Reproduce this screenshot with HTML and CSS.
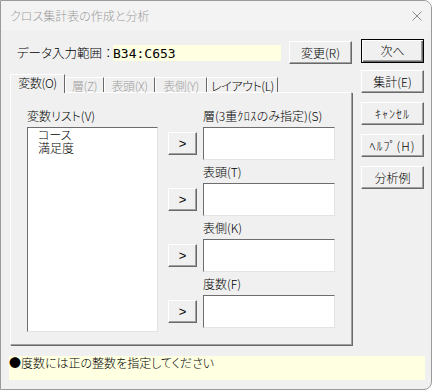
FILE: index.html
```html
<!DOCTYPE html>
<html lang="ja">
<head>
<meta charset="utf-8">
<title>クロス集計表の作成と分析</title>
<link rel="stylesheet" href="styles.css">
</head>
<body>
<div class="window">
  <div class="titlebar">
    <span class="title">クロス集計表の作成と分析</span>
    <svg class="close" width="10" height="10" viewBox="0 0 10 10"><path d="M0.5 0.5L9.5 9.5M9.5 0.5L0.5 9.5" stroke="#8a8a8a" stroke-width="1" fill="none"/></svg>
  </div>
  <div class="main">
    <div class="left">
      <div class="rangerow">
        <span class="rangelabel">データ入力範囲<span class="colon">：</span></span>
        <div class="rangeinput">B34:C653</div>
        <div class="btn btn-change">変更(R)</div>
      </div>
      <div class="tabs">
        <div class="tab active t-var">変数(O)</div>
        <div class="tab disabled t-so">層(Z)</div>
        <div class="tab disabled t-hyo">表頭(X)</div>
        <div class="tab disabled t-soku">表側(Y)</div>
        <div class="tab t-lay">レイアウト(L)</div>
      </div>
      <div class="panel">
        <div class="listcol">
          <div class="plabel">変数リスト(V)</div>
          <div class="listbox">
            <div class="item">コース</div>
            <div class="item">満足度</div>
          </div>
        </div>
        <div class="fields">
          <div class="field">
            <div class="flabel">層(3重<span class="hw">ｸﾛｽ</span>のみ指定)(S)</div>
            <div class="frow"><div class="btn btn-arrow">&gt;</div><div class="fbox"></div></div>
          </div>
          <div class="field">
            <div class="flabel">表頭(T)</div>
            <div class="frow"><div class="btn btn-arrow">&gt;</div><div class="fbox"></div></div>
          </div>
          <div class="field">
            <div class="flabel">表側(K)</div>
            <div class="frow"><div class="btn btn-arrow">&gt;</div><div class="fbox"></div></div>
          </div>
          <div class="field">
            <div class="flabel">度数(F)</div>
            <div class="frow"><div class="btn btn-arrow">&gt;</div><div class="fbox"></div></div>
          </div>
        </div>
      </div>
    </div>
    <div class="right">
      <div class="btn btn-side btn-default">次へ</div>
      <div class="btn btn-side">集計(E)</div>
      <div class="btn btn-side hwbtn">ｷｬﾝｾﾙ</div>
      <div class="btn btn-side hwbtn">ﾍﾙﾌﾟ(H)</div>
      <div class="btn btn-side">分析例</div>
    </div>
  </div>
  <div class="status">●度数には正の整数を指定してください</div>
</div>
</body>
</html>
```
FILE: styles.css
```css
* { box-sizing: border-box; }
html, body { margin: 0; padding: 0; }
body {
  background: #ffffff;
  font-family: "Noto Sans CJK JP", "Liberation Sans", sans-serif;
  font-size: 12px;
  font-weight: 300;
  color: #000;
}
.window {
  width: 432px;
  height: 390px;
  background: #f0f0f0;
  border: 1px solid #9a9a9a;
  border-radius: 0 8px 8px 0;
  overflow: hidden;
}
.titlebar {
  height: 30px;
  background: #f3f3f3;
  display: flex;
  align-items: center;
  justify-content: space-between;
  padding: 0 9px 0 9px;
}
.title {
  color: #9b9b9b;
  font-size: 12px;
  font-feature-settings: "palt";
  line-height: 14px;
}
.close { display: block; }
.main {
  display: flex;
  padding-left: 9px;
}
.left { width: 342px; }
.rangerow {
  margin-top: 10px;
  height: 23px;
  display: flex;
  align-items: center;
}
.rangelabel {
  margin-left: 7px;
  width: 96px;
  font-size: 12.5px;
  line-height: 16px;
  font-feature-settings: "palt";
  white-space: nowrap;
}
.colon { font-feature-settings: normal; }
.rangeinput {
  width: 168px;
  height: 16px;
  background: #ffffe1;
  font-family: "DejaVu Sans Mono", "Liberation Mono", monospace;
  font-size: 13px;
  font-weight: 400;
  line-height: 17px;
}
.btn {
  background: #f0f0f0;
  border: 1px solid;
  border-color: #ffffff #696969 #696969 #ffffff;
  box-shadow: inset -1px -1px 0 #a0a0a0;
  display: flex;
  align-items: center;
  justify-content: center;
  font-size: 12px;
  line-height: 14px;
  font-feature-settings: "palt";
  white-space: nowrap;
}
.btn-change {
  margin-left: 8px;
  width: 63px;
  height: 23px;
}
.tabs {
  margin-top: 10px;
  height: 18px;
  display: flex;
  align-items: flex-end;
  position: relative;
  z-index: 1;
}
.tab {
  height: 15px;
  border-left: 1px solid #ffffff;
  border-top: 1px solid #ffffff;
  border-right: 1px solid #696969;
  display: flex;
  align-items: center;
  justify-content: center;
  line-height: 13px;
  font-feature-settings: "palt";
  letter-spacing: -0.4px;
  white-space: nowrap;
  background: #f0f0f0;
}
.tab.active {
  height: 19px;
  margin-bottom: -1px;
  padding-bottom: 3px;
}
.tab.disabled { color: #a0a0a0; }
.t-var { width: 55px; }
.t-so { width: 39px; }
.t-hyo { width: 51px; }
.t-soku { width: 52px; }
.t-lay { width: 71px; }
.panel {
  width: 342px;
  height: 253px;
  border-left: 1px solid #ffffff;
  border-top: 1px solid #ffffff;
  border-right: 1px solid #a0a0a0;
  border-bottom: 1px solid #a0a0a0;
  box-shadow: 1px 1px 0 #696969;
  padding: 11px 0 0 16px;
  display: flex;
}
.listcol { width: 131px; }
.plabel {
  height: 23px;
  line-height: 23px;
  font-feature-settings: "palt";
}
.listbox {
  height: 205px;
  background: #ffffff;
  border: 1px solid;
  border-color: #6d6d6d #e3e3e3 #e3e3e3 #6d6d6d;
  padding: 0 0 0 10px;
}
.item {
  line-height: 13px;
  font-feature-settings: "palt";
}
.fields { margin-left: 10px; }
.flabel {
  margin-left: 35px;
  height: 23px;
  line-height: 23px;
  white-space: nowrap;
  font-feature-settings: "palt";
}
.hw { letter-spacing: 0.5px; }
.frow {
  display: flex;
  align-items: center;
  gap: 6px;
}
.btn-arrow {
  width: 29px;
  height: 23px;
  font-family: "Liberation Sans", sans-serif;
  font-size: 13px;
  font-weight: 400;
}
.fbox {
  width: 132px;
  height: 33px;
  background: #ffffff;
  border: 1px solid;
  border-color: #6d6d6d #e3e3e3 #e3e3e3 #6d6d6d;
}
.right {
  margin-left: 9px;
  width: 63px;
  padding-top: 8px;
  display: flex;
  flex-direction: column;
  gap: 9px;
}
.btn-side { height: 23px; }
.hwbtn { letter-spacing: 1px; }
.btn-default {
  height: 24px;
  margin-bottom: -2px;
  border: 1px solid #000;
  box-shadow: inset 1px 1px 0 #ffffff, inset -1px -1px 0 #696969, inset -2px -2px 0 #a0a0a0;
}
.status {
  margin: 11px 0 0 8px;
  width: 416px;
  height: 24px;
  background: #ffffe1;
  line-height: 14px;
  font-feature-settings: "palt";
}
```
